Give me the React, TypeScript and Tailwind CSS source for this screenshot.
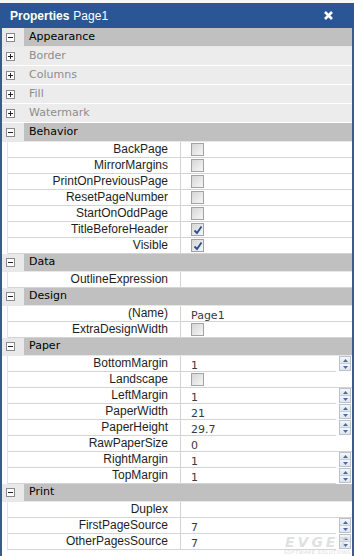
import React from 'react';

type Prop = {
  label: string;
  value?: string;
  check?: boolean;
  checked?: boolean;
  spin?: boolean;
};

type Group = {
  name: string;
  subs?: string[];
  props?: Prop[];
  tall?: boolean;
};

const groups: Group[] = [
  { name: 'Appearance', subs: ['Border', 'Columns', 'Fill', 'Watermark'], tall: true },
  {
    name: 'Behavior',
    tall: true,
    props: [
      { label: 'BackPage', check: true },
      { label: 'MirrorMargins', check: true },
      { label: 'PrintOnPreviousPage', check: true },
      { label: 'ResetPageNumber', check: true },
      { label: 'StartOnOddPage', check: true },
      { label: 'TitleBeforeHeader', check: true, checked: true },
      { label: 'Visible', check: true, checked: true },
    ],
  },
  { name: 'Data', props: [{ label: 'OutlineExpression' }] },
  {
    name: 'Design',
    props: [
      { label: '(Name)', value: 'Page1' },
      { label: 'ExtraDesignWidth', check: true },
    ],
  },
  {
    name: 'Paper',
    props: [
      { label: 'BottomMargin', value: '1', spin: true },
      { label: 'Landscape', check: true },
      { label: 'LeftMargin', value: '1', spin: true },
      { label: 'PaperWidth', value: '21', spin: true },
      { label: 'PaperHeight', value: '29.7', spin: true },
      { label: 'RawPaperSize', value: '0' },
      { label: 'RightMargin', value: '1', spin: true },
      { label: 'TopMargin', value: '1', spin: true },
    ],
  },
  {
    name: 'Print',
    props: [
      { label: 'Duplex' },
      { label: 'FirstPageSource', value: '7', spin: true },
      { label: 'OtherPagesSource', value: '7', spin: true },
    ],
  },
];

function ToggleBox({ open }: { open: boolean }) {
  return (
    <div className="w-[9px] h-[9px] border border-[#8a8a8a] bg-white flex items-center justify-center">
      <svg width="7" height="7" viewBox="0 0 7 7">
        <path d="M1 3.5h5" stroke="#222" strokeWidth="1" />
        {!open && <path d="M3.5 1v5" stroke="#222" strokeWidth="1" />}
      </svg>
    </div>
  );
}

function CheckBox({ checked }: { checked?: boolean }) {
  return (
    <div className="w-[13px] h-[13px] border border-[#a3a3a3] bg-gradient-to-br from-[#d6d6d6] to-[#f6f6f6] flex items-center justify-center">
      {checked && (
        <svg width="10" height="10" viewBox="0 0 10 10">
          <path d="M1.5 5.5L4 8L8.5 1.5" stroke="#2d4d94" strokeWidth="1.8" fill="none" />
        </svg>
      )}
    </div>
  );
}

function Spinner() {
  return (
    <div className="w-[12px] h-[15px] ml-[3px] mr-[1px] flex flex-col border border-[#b9c1cc]">
      <div className="flex-1 flex items-center justify-center bg-gradient-to-b from-[#f4f7fb] to-[#dfe5ee] border-b border-[#c6cdd7]">
        <svg width="5" height="3" viewBox="0 0 5 3">
          <path d="M0 3L2.5 0L5 3Z" fill="#4d6a9c" />
        </svg>
      </div>
      <div className="flex-1 flex items-center justify-center bg-gradient-to-b from-[#f4f7fb] to-[#dfe5ee]">
        <svg width="5" height="3" viewBox="0 0 5 3">
          <path d="M0 0L2.5 3L5 0Z" fill="#4d6a9c" />
        </svg>
      </div>
    </div>
  );
}

function PropRow({ p }: { p: Prop }) {
  return (
    <div className="flex h-[16px] bg-white">
      <div className="w-[6px] shrink-0 border-r border-[#e2e2e2]" />
      <div
        className="w-[173px] shrink-0 border-b border-r border-[#d4d4d4] text-right pr-[12px] text-[12px] leading-[15px] text-[#1e1e1e]"
        style={{ fontFamily: '"Liberation Sans", Arial, sans-serif' }}
      >
        {p.label}
      </div>
      <div className="flex-1 flex items-start">
        <div
          className="flex-1 h-[16px] border-b border-[#d4d4d4] pl-[10px] text-[11px] leading-[15px] pt-[2px] text-[#3a3a3a]"
          style={{ fontFamily: '"DejaVu Sans", Verdana, sans-serif' }}
        >
          {p.check ? (
            <div className="-mt-[1px]">
              <CheckBox checked={p.checked} />
            </div>
          ) : (
            p.value
          )}
        </div>
        {p.spin && <Spinner />}
      </div>
    </div>
  );
}

function GroupHeader({ name, tall }: { name: string; tall?: boolean }) {
  return (
    <div className={`flex ${tall ? 'h-[19px]' : 'h-[18px]'} border-b border-[#e8e8e8]`}>
      <div className="w-[22px] shrink-0 bg-[#e9e9e9] flex items-center justify-center pr-[5px]">
        <ToggleBox open />
      </div>
      <div
        className="flex-1 bg-[#c0c0c0] pl-[5px] flex items-center text-[11px] text-black"
        style={{ fontFamily: '"DejaVu Sans", Verdana, sans-serif' }}
      >
        {name}
      </div>
    </div>
  );
}

function SubRow({ name }: { name: string }) {
  return (
    <div className="flex h-[19px] bg-[#ececec] border-b border-white">
      <div className="w-[22px] shrink-0 flex items-center justify-center pr-[5px]">
        <ToggleBox open={false} />
      </div>
      <div
        className="flex-1 pl-[5px] flex items-center text-[11px] text-[#8c8c8c]"
        style={{ fontFamily: '"DejaVu Sans", Verdana, sans-serif' }}
      >
        {name}
      </div>
    </div>
  );
}

export default function App() {
  return (
    <div className="w-[354px] h-[556px] bg-white overflow-hidden flex flex-col relative">
      <div className="h-[3px] bg-[#f4f6f9]" />
      <div
        className="h-[25px] bg-[#2b5696] flex items-center pl-[10px] pr-[21px] text-white text-[12px]"
        style={{ fontFamily: '"Liberation Sans", Arial, sans-serif' }}
      >
        <span className="font-bold">Properties</span>
        <span className="ml-[4px]">Page1</span>
        <svg className="ml-auto" width="9" height="9" viewBox="0 0 9 9">
          <path d="M1 1L8 8M8 1L1 8" stroke="white" strokeWidth="2.6" />
        </svg>
      </div>
      <div className="flex-1 border-l-2 border-r-2 border-[#3b5a8c]">
        {groups.map((g) => (
          <div key={g.name}>
            <GroupHeader name={g.name} tall={g.tall} />
            {g.subs?.map((s) => <SubRow key={s} name={s} />)}
            {g.props?.map((p) => <PropRow key={p.label} p={p} />)}
          </div>
        ))}
      </div>
      <div
        className="absolute right-[3px] bottom-[1px] flex flex-col items-end pointer-events-none"
        style={{ fontFamily: '"DejaVu Sans", Verdana, sans-serif' }}
      >
        <span className="text-[14px] leading-[12px] font-bold italic tracking-[3px] text-[#d9d9d9]/80">
          EVGET
        </span>
        <span className="mt-[2px] text-[5px] leading-[5px] italic tracking-[0.5px] text-[#d9d9d9]">
          SOFTWARE SOLUTIONS
        </span>
      </div>
    </div>
  );
}
